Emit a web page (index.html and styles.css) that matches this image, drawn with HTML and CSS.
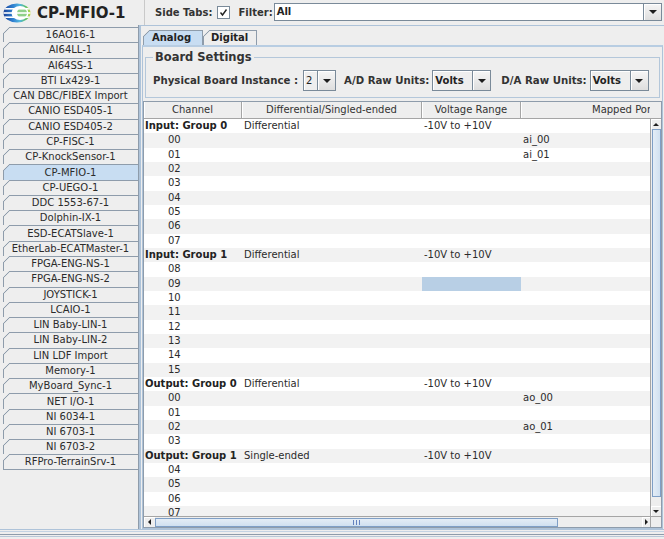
FILE: index.html
```html
<!DOCTYPE html>
<html>
<head>
<meta charset="utf-8">
<title>CP-MFIO-1</title>
<link rel="stylesheet" href="styles.css">
</head>
<body>
<div class="app">
  <header class="topbar">
    <div class="brand">
      <svg class="logo" viewBox="0 0 28 20" aria-hidden="true">
        <defs>
          <clipPath id="lc"><ellipse cx="14" cy="10" rx="13.5" ry="9.5"/></clipPath>
          <linearGradient id="lg" x1="0" x2="1" y1="0" y2="0">
            <stop offset="0" stop-color="#1b3f94"/>
            <stop offset="0.35" stop-color="#2f7fd0"/>
            <stop offset="0.6" stop-color="#53b7e0"/>
            <stop offset="0.8" stop-color="#5cc070"/>
            <stop offset="1" stop-color="#c9d93a"/>
          </linearGradient>
        </defs>
        <g clip-path="url(#lc)">
          <rect width="28" height="20" fill="url(#lg)"/>
          <ellipse cx="17" cy="10" rx="8.5" ry="7" fill="#ffffff"/>
          <ellipse cx="19" cy="10" rx="5" ry="5" fill="#8fd08a"/>
          <rect x="0" y="5" width="28" height="1.6" fill="#ffffff"/>
          <rect x="0" y="9.2" width="28" height="1.6" fill="#ffffff"/>
          <rect x="0" y="13.4" width="28" height="1.6" fill="#ffffff"/>
        </g>
      </svg>
      <span class="brand-title">CP-MFIO-1</span>
    </div>
    <div class="toolbar">
      <span class="tool-label">Side Tabs:</span>
      <span class="checkbox"><svg viewBox="0 0 11 11" aria-hidden="true"><path d="M2.5 5.5 L4.5 8 L8.5 2.5" fill="none" stroke="#222" stroke-width="1.4"/></svg></span>
      <span class="tool-label filter-label">Filter:</span>
      <div class="combo combo-filter"><span class="combo-text">All</span><span class="combo-btn"><i class="tri-down"></i></span></div>
    </div>
  </header>

  <div class="main">
    <nav class="sidetabs">
      <div class="stab">16AO16-1</div>
      <div class="stab">AI64LL-1</div>
      <div class="stab">AI64SS-1</div>
      <div class="stab">BTI Lx429-1</div>
      <div class="stab">CAN DBC/FIBEX Import</div>
      <div class="stab">CANIO ESD405-1</div>
      <div class="stab">CANIO ESD405-2</div>
      <div class="stab">CP-FISC-1</div>
      <div class="stab">CP-KnockSensor-1</div>
      <div class="stab selected">CP-MFIO-1</div>
      <div class="stab">CP-UEGO-1</div>
      <div class="stab">DDC 1553-67-1</div>
      <div class="stab">Dolphin-IX-1</div>
      <div class="stab">ESD-ECATSlave-1</div>
      <div class="stab">EtherLab-ECATMaster-1</div>
      <div class="stab">FPGA-ENG-NS-1</div>
      <div class="stab">FPGA-ENG-NS-2</div>
      <div class="stab">JOYSTICK-1</div>
      <div class="stab">LCAIO-1</div>
      <div class="stab">LIN Baby-LIN-1</div>
      <div class="stab">LIN Baby-LIN-2</div>
      <div class="stab">LIN LDF Import</div>
      <div class="stab">Memory-1</div>
      <div class="stab">MyBoard_Sync-1</div>
      <div class="stab">NET I/O-1</div>
      <div class="stab">NI 6034-1</div>
      <div class="stab">NI 6703-1</div>
      <div class="stab">NI 6703-2</div>
      <div class="stab last">RFPro-TerrainSrv-1</div>
    </nav>

    <section class="content">
      <div class="tabs">
        <div class="tab tab-analog selected">Analog</div>
        <div class="tab tab-digital">Digital</div>
      </div>
      <div class="tabpanel">
        <fieldset class="board">
          <legend>Board Settings</legend>
          <div class="board-row">
            <span class="blabel">Physical Board Instance :</span>
            <div class="combo combo-inst"><span class="combo-text plain">2</span><span class="combo-btn"><i class="tri-down"></i></span></div>
            <span class="blabel ad-label">A/D Raw Units:</span>
            <div class="combo combo-units"><span class="combo-text">Volts</span><span class="combo-btn"><i class="tri-down"></i></span></div>
            <span class="blabel da-label">D/A Raw Units:</span>
            <div class="combo combo-units"><span class="combo-text">Volts</span><span class="combo-btn"><i class="tri-down"></i></span></div>
          </div>
        </fieldset>

        <div class="scrollpane">
          <div class="thead">
            <div class="th">Channel</div>
            <div class="th">Differential/Singled-ended</div>
            <div class="th">Voltage Range</div>
            <div class="th">Mapped Port</div>
          </div>
          <div class="hcorner"></div>

          <div class="tbody">
            <div class="tr grp"><div class="td">Input: Group 0</div><div class="td">Differential</div><div class="td">-10V to +10V</div><div class="td"></div></div>
            <div class="tr ch"><div class="td">00</div><div class="td"></div><div class="td"></div><div class="td">ai_00</div></div>
            <div class="tr ch"><div class="td">01</div><div class="td"></div><div class="td"></div><div class="td">ai_01</div></div>
            <div class="tr ch"><div class="td">02</div><div class="td"></div><div class="td"></div><div class="td"></div></div>
            <div class="tr ch"><div class="td">03</div><div class="td"></div><div class="td"></div><div class="td"></div></div>
            <div class="tr ch"><div class="td">04</div><div class="td"></div><div class="td"></div><div class="td"></div></div>
            <div class="tr ch"><div class="td">05</div><div class="td"></div><div class="td"></div><div class="td"></div></div>
            <div class="tr ch"><div class="td">06</div><div class="td"></div><div class="td"></div><div class="td"></div></div>
            <div class="tr ch"><div class="td">07</div><div class="td"></div><div class="td"></div><div class="td"></div></div>
            <div class="tr grp"><div class="td">Input: Group 1</div><div class="td">Differential</div><div class="td">-10V to +10V</div><div class="td"></div></div>
            <div class="tr ch"><div class="td">08</div><div class="td"></div><div class="td"></div><div class="td"></div></div>
            <div class="tr ch"><div class="td">09</div><div class="td"></div><div class="td sel"></div><div class="td"></div></div>
            <div class="tr ch"><div class="td">10</div><div class="td"></div><div class="td"></div><div class="td"></div></div>
            <div class="tr ch"><div class="td">11</div><div class="td"></div><div class="td"></div><div class="td"></div></div>
            <div class="tr ch"><div class="td">12</div><div class="td"></div><div class="td"></div><div class="td"></div></div>
            <div class="tr ch"><div class="td">13</div><div class="td"></div><div class="td"></div><div class="td"></div></div>
            <div class="tr ch"><div class="td">14</div><div class="td"></div><div class="td"></div><div class="td"></div></div>
            <div class="tr ch"><div class="td">15</div><div class="td"></div><div class="td"></div><div class="td"></div></div>
            <div class="tr grp"><div class="td">Output: Group 0</div><div class="td">Differential</div><div class="td">-10V to +10V</div><div class="td"></div></div>
            <div class="tr ch"><div class="td">00</div><div class="td"></div><div class="td"></div><div class="td">ao_00</div></div>
            <div class="tr ch"><div class="td">01</div><div class="td"></div><div class="td"></div><div class="td"></div></div>
            <div class="tr ch"><div class="td">02</div><div class="td"></div><div class="td"></div><div class="td">ao_01</div></div>
            <div class="tr ch"><div class="td">03</div><div class="td"></div><div class="td"></div><div class="td"></div></div>
            <div class="tr grp"><div class="td">Output: Group 1</div><div class="td">Single-ended</div><div class="td">-10V to +10V</div><div class="td"></div></div>
            <div class="tr ch"><div class="td">04</div><div class="td"></div><div class="td"></div><div class="td"></div></div>
            <div class="tr ch"><div class="td">05</div><div class="td"></div><div class="td"></div><div class="td"></div></div>
            <div class="tr ch"><div class="td">06</div><div class="td"></div><div class="td"></div><div class="td"></div></div>
            <div class="tr ch"><div class="td">07</div><div class="td"></div><div class="td"></div><div class="td"></div></div>
          </div>

          <div class="vscroll">
            <div class="sbtn"><i class="tri-up"></i></div>
            <div class="vtrack"><div class="vthumb"></div></div>
            <div class="sbtn"><i class="tri-down small"></i></div>
          </div>

          <div class="hscroll">
            <div class="sbtn hbtn"><i class="tri-left"></i></div>
            <div class="htrack"><div class="hthumb"><span class="grip"></span></div></div>
            <div class="sbtn hbtn right"><i class="tri-right"></i></div>
          </div>
          <div class="bcorner"></div>
        </div>
      </div>
    </section>
  </div>
  <footer class="bottom-edge"></footer>
</div>
</body>
</html>
```

FILE: styles.css
```css
html, body {
  margin: 0;
  padding: 0;
}

body {
  width: 664px;
  height: 539px;
  overflow: hidden;
  background: #eeeeee;
  font-family: "DejaVu Sans", "Liberation Sans", sans-serif;
  font-size: 10px;
  color: #333333;
}

.app {
  display: flex;
  flex-direction: column;
  height: 539px;
}

/* ---------- top bar ---------- */
.topbar {
  display: flex;
  height: 25px;
  flex: none;
}

.brand {
  width: 145px;
  box-sizing: border-box;
  display: flex;
  align-items: center;
  gap: 6px;
  padding-left: 3px;
  border-right: 1px solid #c9c9c9;
}

.logo {
  width: 28px;
  height: 20px;
  flex: none;
}

.brand-title {
  font-size: 15px;
  font-weight: bold;
  color: #222222;
}

.toolbar {
  flex: 1;
  display: flex;
  align-items: center;
  padding-left: 10px;
}

.tool-label {
  font-weight: bold;
  color: #333333;
}

.checkbox {
  width: 11px;
  height: 11px;
  margin-left: 5px;
  border: 1px solid #7a8a99;
  background: #ffffff;
  display: flex;
}

.checkbox svg {
  width: 11px;
  height: 11px;
}

.filter-label {
  margin-left: 8px;
}

/* ---------- combo boxes ---------- */
.combo {
  display: flex;
  box-sizing: border-box;
  border: 1px solid #7a8a99;
  background: #eeeeee;
}

.combo-text {
  flex: 1;
  display: flex;
  align-items: center;
  padding-left: 2px;
  font-weight: bold;
  color: #222222;
  box-shadow: inset 1px 1px 0 #ffffff;
}

.combo-text.plain {
  font-weight: normal;
}

.combo-btn {
  width: 17px;
  flex: none;
  display: flex;
  align-items: center;
  justify-content: center;
  border-left: 1px solid #7a8a99;
  background: linear-gradient(#f6f6f6, #dedede);
  box-shadow: inset 1px 1px 0 #ffffff;
}

.combo-filter {
  flex: 1;
  height: 18px;
  margin-right: 2px;
  margin-left: 1px;
  margin-top: -2px;
}

.combo-filter .combo-text {
  background: #ffffff;
  box-shadow: none;
}

.combo-inst {
  width: 33px;
  height: 21px;
  margin-left: 5px;
}

.combo-units {
  width: 59px;
  height: 21px;
  margin-left: 3px;
}

.tri-down {
  width: 0;
  height: 0;
  border-left: 4px solid transparent;
  border-right: 4px solid transparent;
  border-top: 4px solid #1e1e1e;
}

.tri-down.small {
  border-left-width: 3px;
  border-right-width: 3px;
  border-top-width: 3px;
}

.tri-up {
  width: 0;
  height: 0;
  border-left: 3px solid transparent;
  border-right: 3px solid transparent;
  border-bottom: 3px solid #1e1e1e;
}

.tri-left {
  width: 0;
  height: 0;
  border-top: 3px solid transparent;
  border-bottom: 3px solid transparent;
  border-right: 3px solid #1e1e1e;
}

.tri-right {
  width: 0;
  height: 0;
  border-top: 3px solid transparent;
  border-bottom: 3px solid transparent;
  border-left: 3px solid #1e1e1e;
}

/* ---------- main ---------- */
.main {
  display: flex;
  height: 504px;
  flex: none;
}

.sidetabs {
  width: 139px;
  flex: none;
  box-sizing: border-box;
  padding-top: 2px;
  padding-left: 3px;
  border-right: 1px solid #8e9cab;
}

.stab {
  height: 15.28px;
  box-sizing: border-box;
  display: flex;
  align-items: center;
  justify-content: center;
  white-space: nowrap;
  color: #2b2b2b;
  background:
    linear-gradient(#8e9cab, #8e9cab) top right / calc(100% - 6px) 1px no-repeat,
    linear-gradient(#8e9cab, #8e9cab) bottom left / 1px calc(100% - 6px) no-repeat,
    linear-gradient(to bottom right, transparent calc(50% - 0.8px), #8e9cab 50%, transparent calc(50% + 0.8px)) top left / 7px 7px no-repeat,
    #eeeeee;
}

.stab.selected {
  background:
    linear-gradient(#8e9cab, #8e9cab) top right / calc(100% - 6px) 1px no-repeat,
    linear-gradient(#8e9cab, #8e9cab) bottom left / 1px calc(100% - 6px) no-repeat,
    linear-gradient(to bottom right, #eeeeee calc(50% - 0.8px), #8e9cab 50%, #c8ddf2 calc(50% + 0.8px)) top left / 7px 7px no-repeat,
    #c8ddf2;
}

.stab.last {
  border-bottom: 1px solid #8e9cab;
}

.content {
  flex: 1;
  display: flex;
  flex-direction: column;
  min-width: 0;
  border-left: 2px solid #aec3d9;
  border-top: 1px solid #aec3d9;
  padding: 4px 1px 0 1px;
}

.tabs {
  display: flex;
  height: 15px;
  margin-left: 1px;
  flex: none;
}

.tab {
  box-sizing: border-box;
  height: 15px;
  padding-left: 9px;
  display: flex;
  align-items: center;
  font-weight: bold;
  color: #222222;
  border-right: 1px solid #8e9cab;
  background:
    linear-gradient(#8e9cab, #8e9cab) top right / calc(100% - 6px) 1px no-repeat,
    linear-gradient(#8e9cab, #8e9cab) bottom left / 1px calc(100% - 6px) no-repeat,
    linear-gradient(to bottom right, transparent calc(50% - 0.8px), #8e9cab 50%, transparent calc(50% + 0.8px)) top left / 7px 7px no-repeat,
    #eeeeee;
}

.tab.selected {
  background:
    linear-gradient(#8e9cab, #8e9cab) top right / calc(100% - 6px) 1px no-repeat,
    linear-gradient(#8e9cab, #8e9cab) bottom left / 1px calc(100% - 6px) no-repeat,
    linear-gradient(to bottom right, #eeeeee calc(50% - 0.8px), #8e9cab 50%, #c8ddf2 calc(50% + 0.8px)) top left / 7px 7px no-repeat,
    #c8ddf2;
}

.tab-analog {
  width: 60px;
}

.tab-digital {
  width: 54px;
  padding-left: 8px;
}

.tabpanel {
  flex: 1;
  display: flex;
  flex-direction: column;
  min-height: 0;
  border: 1px solid #aec3d9;
  border-top: 2px solid #b8cde2;
  padding-top: 3px;
}

/* ---------- board settings ---------- */
.board {
  margin: 0 2px;
  padding: 6px 6px 6px 7px;
  border: 1px solid #b4c7da;
  flex: none;
}

.board legend {
  font-size: 11.5px;
  font-weight: bold;
  color: #333333;
  padding: 0 2px;
  margin-left: 0;
}

.board-row {
  display: flex;
  align-items: center;
  height: 21px;
}

.blabel {
  font-size: 10.2px;
  font-weight: bold;
  color: #333333;
  white-space: nowrap;
}

.ad-label {
  margin-left: 8px;
}

.da-label {
  margin-left: 10px;
}

/* ---------- table ---------- */
.scrollpane {
  flex: 1;
  min-height: 0;
  margin-top: 3px;
  border: 1px solid #8e9cab;
  background: #ffffff;
  display: grid;
  grid-template-columns: minmax(0, 1fr) 11px;
  grid-template-rows: 17px minmax(0, 1fr) 11px;
}

.thead {
  display: flex;
  overflow: hidden;
  background: #eeeeee;
  border-bottom: 1px solid #a5a5a5;
  box-sizing: border-box;
}

.th {
  flex: none;
  box-sizing: border-box;
  text-align: center;
  line-height: 16px;
  white-space: nowrap;
  color: #333333;
  border-right: 1px solid #a5a5a5;
  box-shadow: inset 1px 0 0 #ffffff;
}

.th:nth-child(1) { width: 98px; }
.th:nth-child(2) { width: 180px; }
.th:nth-child(3) { width: 99px; }
.th:nth-child(4) { width: 206px; }

.hcorner {
  background: #eeeeee;
  border-bottom: 1px solid #a5a5a5;
}

.tbody {
  overflow: hidden;
  background: #ffffff;
}

.tr {
  display: grid;
  grid-template-columns: 98px 180px 99px 206px;
  height: 14.33px;
  line-height: 14.33px;
  white-space: nowrap;
  color: #2b2b2b;
}

.tr:nth-child(even) {
  background: #f2f2f2;
}

.td {
  padding-left: 2px;
  overflow: hidden;
}

.grp .td:first-child {
  font-weight: bold;
  color: #222222;
  padding-left: 1px;
}

.ch .td:first-child {
  padding-left: 24px;
}

.td.sel {
  background: #b8cfe5;
}

/* ---------- scrollbars ---------- */
.vscroll {
  display: flex;
  flex-direction: column;
  background: #eeeeee;
  border-left: 1px solid #a5a5a5;
}

.sbtn {
  height: 10px;
  flex: none;
  display: flex;
  align-items: center;
  justify-content: center;
  background: #eeeeee;
  box-shadow: inset 1px 1px 0 #ffffff;
}

.vtrack {
  flex: 1;
  padding: 0 0 9px 1px;
  display: flex;
}

.vthumb {
  flex: 1;
  border: 1px solid #7f9fc6;
  background: linear-gradient(to right, #e4edf6, #d0e0f0);
}

.hscroll {
  display: flex;
  background: #eeeeee;
  border-top: 1px solid #a5a5a5;
}

.hbtn {
  width: 11px;
  height: auto;
}

.hbtn.right {
  margin-left: auto;
  width: 8px;
}

.htrack {
  flex: 1;
  display: flex;
  padding-top: 1px;
}

.hthumb {
  width: 403px;
  box-sizing: border-box;
  border: 1px solid #7f9fc6;
  background: linear-gradient(#e4edf6, #d0e0f0);
  display: flex;
  align-items: center;
  justify-content: center;
}

.grip {
  width: 7px;
  height: 5px;
  background: repeating-linear-gradient(to right, #6382bf 0 1px, transparent 1px 3px);
}

.bcorner {
  background: #eeeeee;
  border-top: 1px solid #a5a5a5;
  border-left: 1px solid #a5a5a5;
}

/* ---------- bottom edge ---------- */
.bottom-edge {
  flex: 1;
  border-top: 1px solid #aec3d9;
  background:
    linear-gradient(#c3d3e3, #c3d3e3) 0 1px / 100% 1px no-repeat,
    linear-gradient(#8e9cab, #8e9cab) 0 4px / 100% 1px no-repeat,
    linear-gradient(#b8c8d8, #b8c8d8) 0 6px / 100% 1px no-repeat,
    #eeeeee;
}
```
